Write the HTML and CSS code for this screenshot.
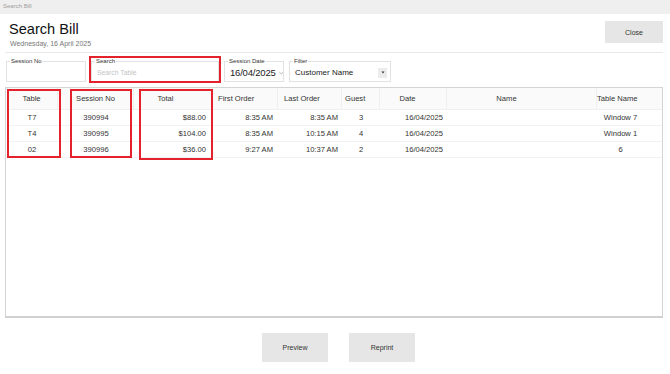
FILE: index.html
```html
<!DOCTYPE html>
<html>
<head>
<meta charset="utf-8">
<link rel="stylesheet" href="styles.css">
</head>
<body>
<div class="titlebar">Search Bill</div>
<div class="main">
  <div class="header">
    <div class="heading">
      <h1 class="title">Search Bill</h1>
      <div class="date">Wednesday, 16 April 2025</div>
    </div>
    <button class="btn close">Close</button>
  </div>

  <div class="filters">
    <div class="field f-session">
      <span class="label">Session No</span>
    </div>
    <div class="field f-search marked">
      <span class="label">Search</span>
      <span class="placeholder">Search Table</span>
    </div>
    <div class="field f-date">
      <span class="label">Session Date</span>
      <span class="date-value">16/04/2025</span>
      <svg class="chev" width="6" height="4" viewBox="0 0 6 4"><path d="M0.5 0.8 L3 3.2 L5.5 0.8" fill="none" stroke="#888" stroke-width="0.8"/></svg>
    </div>
    <div class="field f-filter">
      <span class="label">Filter</span>
      <span class="select-value">Customer Name</span>
      <span class="drop"><svg width="4" height="3" viewBox="0 0 4 3"><path d="M0.5 0.5 L3.5 0.5 L2 2.5 Z" fill="#333"/></svg></span>
    </div>
  </div>

  <div class="grid-wrap">
    <div class="grid">
      <div class="hd c1">Table</div>
      <div class="hd c2">Session No</div>
      <div class="hd c3">Total</div>
      <div class="hd c4">First Order</div>
      <div class="hd c5">Last Order</div>
      <div class="hd c6">Guest</div>
      <div class="hd c7">Date</div>
      <div class="hd c8">Name</div>
      <div class="hd c9">Table Name</div>

      <div class="td c1">T7</div>
      <div class="td c2">390994</div>
      <div class="td c3">$88.00</div>
      <div class="td c4">8:35 AM</div>
      <div class="td c5">8:35 AM</div>
      <div class="td c6">3</div>
      <div class="td c7">16/04/2025</div>
      <div class="td c8"></div>
      <div class="td c9">Window 7</div>

      <div class="td c1">T4</div>
      <div class="td c2">390995</div>
      <div class="td c3">$104.00</div>
      <div class="td c4">8:35 AM</div>
      <div class="td c5">10:15 AM</div>
      <div class="td c6">4</div>
      <div class="td c7">16/04/2025</div>
      <div class="td c8"></div>
      <div class="td c9">Window 1</div>

      <div class="td c1">02</div>
      <div class="td c2">390996</div>
      <div class="td c3">$36.00</div>
      <div class="td c4">9:27 AM</div>
      <div class="td c5">10:37 AM</div>
      <div class="td c6">2</div>
      <div class="td c7">16/04/2025</div>
      <div class="td c8"></div>
      <div class="td c9">6</div>
    </div>
    <div class="mark m-table"></div>
    <div class="mark m-session"></div>
    <div class="mark m-total"></div>
  </div>

  <div class="actions">
    <button class="btn action">Preview</button>
    <button class="btn action">Reprint</button>
  </div>
</div>
</body>
</html>
```

FILE: styles.css
```css
* { box-sizing: border-box; }
html, body { margin: 0; padding: 0; background: #fff; }
body {
  width: 670px;
  height: 374px;
  overflow: hidden;
  font-family: "Liberation Sans", Arial, sans-serif;
  color: #333;
}
.titlebar {
  height: 14px;
  background: #efefef;
  color: #a0a0a0;
  font-size: 6px;
  line-height: 12px;
  padding-left: 3px;
}
.main {
  padding: 0 7px 0 5px;
}
.header {
  height: 39px;
  border-bottom: 1px solid #e8e8e8;
  display: flex;
  justify-content: space-between;
  align-items: flex-start;
}
.heading { padding-left: 4px; }
.title {
  margin: 6px 0 0 0;
  font-size: 14.6px;
  line-height: 18px;
  font-weight: normal;
  color: #111;
}
.date {
  margin-top: 1px;
  margin-left: 1px;
  font-size: 7px;
  line-height: 9px;
  color: #777;
}
.btn {
  border: none;
  background: #e6e6e6;
  font-family: "Liberation Sans", Arial, sans-serif;
  font-size: 7px;
  color: #333;
  padding: 0;
  cursor: pointer;
}
.close {
  width: 58px;
  height: 22px;
  margin-top: 7px;
}
.filters {
  display: flex;
  gap: 5px;
  margin-top: 8px;
  padding-left: 1px;
}
.field {
  position: relative;
  height: 21px;
  border: 1px solid #e2e2e2;
  display: flex;
  align-items: center;
}
.label {
  position: absolute;
  top: -4px;
  left: 3px;
  background: #fff;
  padding: 0 1px;
  font-size: 6px;
  line-height: 6px;
  color: #333;
}
.f-session { width: 80px; }
.f-search { width: 128px; padding-left: 5px; }
.f-date { width: 60px; padding-left: 5px; }
.f-filter { width: 102px; padding-left: 5px; }
.placeholder {
  font-size: 6.8px;
  color: #c4c4c4;
  margin-top: 2px;
}
.date-value {
  font-size: 9.5px;
  color: #222;
  margin-top: 2px;
  letter-spacing: -0.2px;
}
.chev { margin-left: 3px; margin-top: 3px; }
.select-value {
  font-size: 8px;
  color: #222;
  margin-top: 2px;
}
.drop {
  margin-left: auto;
  margin-right: 3px;
  margin-top: 2px;
  width: 9px;
  height: 10px;
  background: #ececec;
  display: flex;
  align-items: center;
  justify-content: center;
}
.marked::after {
  content: "";
  position: absolute;
  top: -6px;
  left: -3px;
  right: -3px;
  bottom: -2px;
  border: 2px solid #e3222b;
}
.grid-wrap {
  position: relative;
  margin-top: 5px;
  height: 231px;
  border: 1px solid #d4d4d4;
  border-bottom: 2px solid #d0d0d0;
}
.grid {
  display: grid;
  grid-template-columns: 52px 76px 79px 65px 64px 38px 67px 150px 1fr;
  grid-template-rows: 22px 16px 16px 16px;
  font-size: 7.6px;
  color: #333;
}
.hd {
  background: #fafafa;
  border-right: 1px solid #efefef;
  border-bottom: 1px solid #f0f0f0;
  display: flex;
  align-items: center;
  white-space: nowrap;
}
.hd.c9 { border-right: none; }
.td {
  border-bottom: 1px solid #f2f2f2;
  display: flex;
  align-items: center;
  white-space: nowrap;
}
.c1, .c2 { justify-content: center; }
.hd.c3 { justify-content: center; padding-right: 15px; }
.td.c3 { justify-content: flex-end; padding-right: 7px; }
.hd.c4 { padding-left: 5px; }
.td.c4 { justify-content: flex-end; padding-right: 5px; }
.hd.c5 { padding-left: 6px; }
.td.c5 { justify-content: flex-end; padding-right: 4px; }
.hd.c6 { padding-left: 3px; }
.td.c6 { justify-content: center; }
.hd.c7 { justify-content: center; padding-right: 11px; }
.td.c7 { justify-content: flex-end; padding-right: 4px; }
.hd.c8 { justify-content: center; padding-right: 30px; }
.hd.c9 { justify-content: flex-start; padding-left: 0; }
.td.c9 { justify-content: center; padding-right: 18px; }
.mark {
  position: absolute;
  border: 2px solid #e3222b;
}
.m-table { left: 1px; top: 1px; width: 54px; height: 69px; }
.m-session { left: 64px; top: 1px; width: 62px; height: 69px; }
.m-total { left: 133px; top: 1px; width: 74px; height: 71px; }
.actions {
  display: flex;
  justify-content: center;
  gap: 21px;
  margin-top: 15px;
  padding-left: 9px;
}
.action {
  width: 66px;
  height: 29px;
}
```
